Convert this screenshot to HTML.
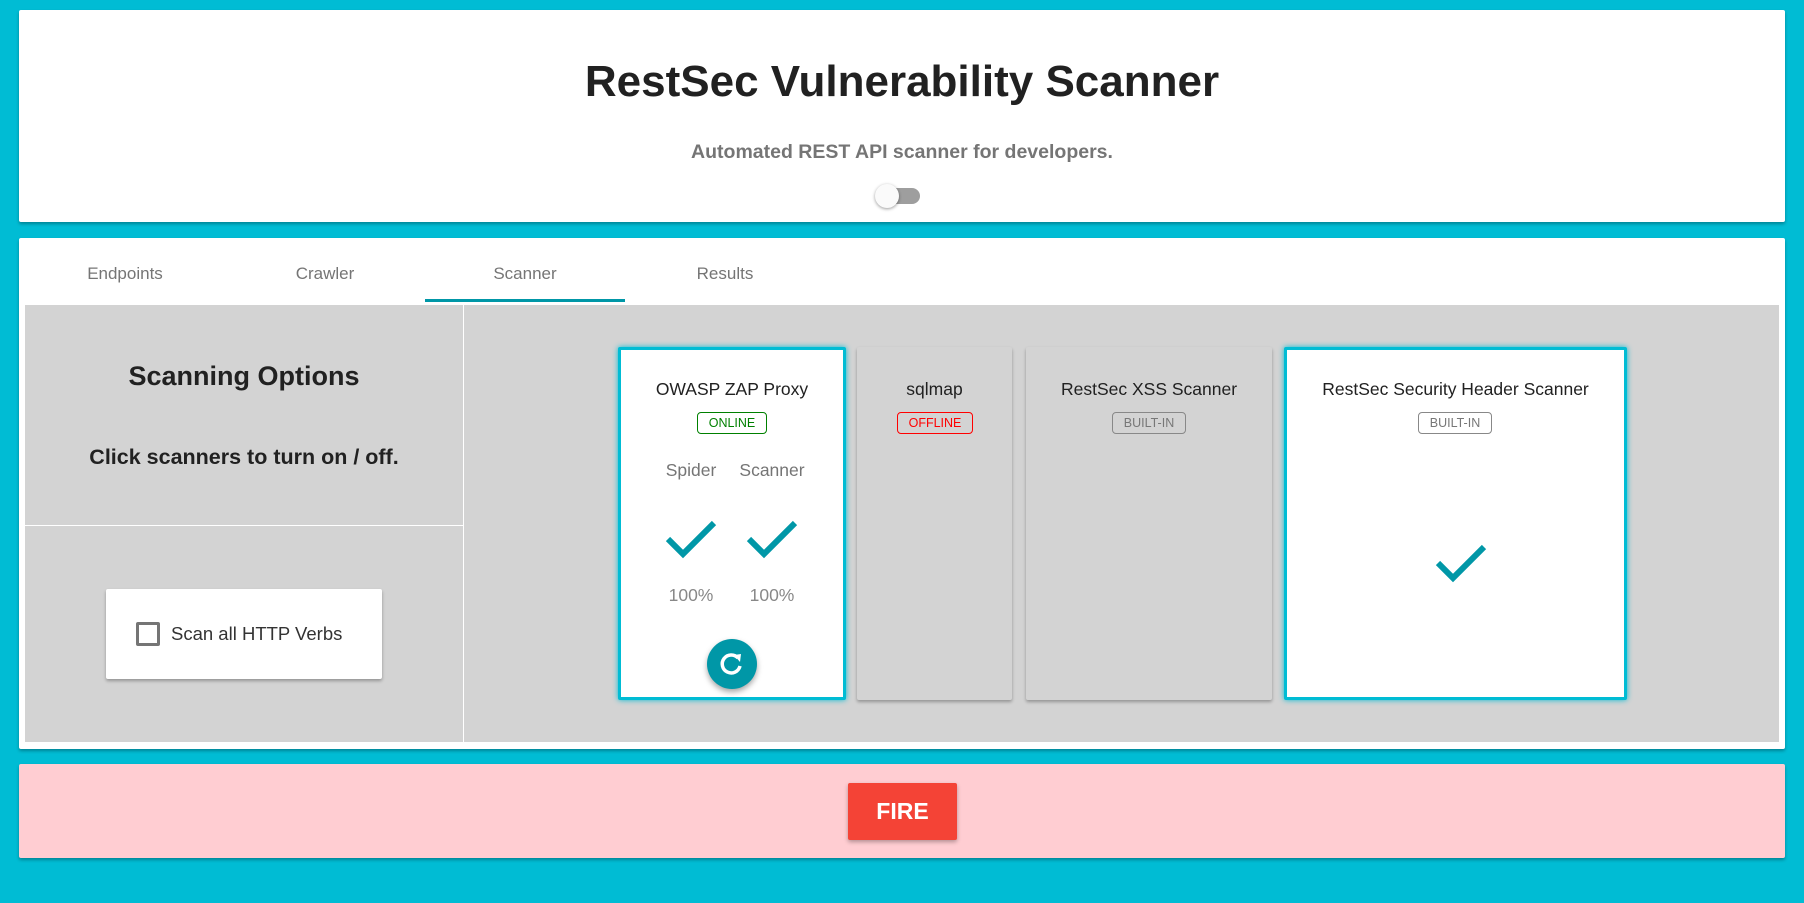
<!DOCTYPE html>
<html><head><meta charset="utf-8"><style>
*{box-sizing:border-box;margin:0;padding:0}
body{width:1804px;height:903px;background:#00bcd4;font-family:"Liberation Sans",sans-serif;position:relative;overflow:hidden}
.a{position:absolute}
.card{background:#fff;box-shadow:0 2px 3px rgba(0,0,0,.3);border-radius:2px}
.c{text-align:center}
.tab{position:absolute;top:264px;width:200px;text-align:center;font-size:17px;color:#757575}
.sc{position:absolute;top:347px;height:353px;background:#d3d3d3;box-shadow:0 2px 3px rgba(0,0,0,.3);border-radius:2px}
.sel{background:#fff;border:3px solid #00bcd4;box-shadow:0 0 6px #00bcd4}
.ttl{position:absolute;left:0;right:0;top:378px;text-align:center;font-size:17.5px;color:#212121}
.bd{position:absolute;top:411px;height:22px;border:1px solid;border-radius:4px;font-size:12.5px;line-height:20px;text-align:center}
.g{font-size:17.5px;color:#757575;position:absolute;text-align:center;width:80px}
</style></head><body>
<div class="a card" style="left:19px;top:10px;width:1766px;height:212px"></div>
<div class="a c" style="left:0;width:1804px;top:57px;font-size:44px;font-weight:bold;color:#212121">RestSec Vulnerability Scanner</div>
<div class="a c" style="left:0;width:1804px;top:141px;font-size:19.5px;font-weight:bold;color:#757575">Automated REST API scanner for developers.</div>
<div class="a" style="left:880px;top:188px;width:40px;height:16px;border-radius:8px;background:#9e9e9e"></div>
<div class="a" style="left:875px;top:184px;width:24px;height:24px;border-radius:50%;background:#fafafa;box-shadow:0 1px 3px rgba(0,0,0,.4)"></div>

<div class="a card" style="left:19px;top:238px;width:1766px;height:511px"></div>
<div class="tab" style="left:25px">Endpoints</div>
<div class="tab" style="left:225px">Crawler</div>
<div class="tab" style="left:425px">Scanner</div>
<div class="tab" style="left:625px">Results</div>
<div class="a" style="left:425px;top:299px;width:200px;height:3px;background:#0097a7"></div>
<div class="a" style="left:25px;top:305px;width:1754px;height:437px;background:#d3d3d3"></div>
<div class="a" style="left:463px;top:305px;width:1px;height:437px;background:#fff"></div>
<div class="a" style="left:25px;top:525px;width:438px;height:1px;background:#fff"></div>
<div class="a c" style="left:25px;width:438px;top:361px;font-size:27px;font-weight:bold;color:#212121">Scanning Options</div>
<div class="a c" style="left:25px;width:438px;top:445px;font-size:21.5px;font-weight:bold;color:#212121">Click scanners to turn on / off.</div>
<div class="a card" style="left:106px;top:589px;width:276px;height:90px"></div>
<div class="a" style="left:136px;top:622px;width:24px;height:24px;border:3px solid #757575;border-radius:2px"></div>
<div class="a" style="left:171px;top:623px;font-size:18.5px;color:#333">Scan all HTTP Verbs</div>

<div class="sc sel" style="left:618px;width:228px">
 <div class="ttl" style="top:29px">OWASP ZAP Proxy</div>
 <div class="bd" style="left:76px;top:62px;width:70px;color:#008000;border-color:#008000">ONLINE</div>
 <div class="g" style="left:30px;top:110px">Spider</div>
 <div class="g" style="left:111px;top:110px">Scanner</div>
 <svg class="a" style="left:44px;top:170px" width="52" height="42" viewBox="0 0 52 42"><path d="M3 19 L18 34 L49 3" fill="none" stroke="#0097a7" stroke-width="6"/></svg>
 <svg class="a" style="left:125px;top:170px" width="52" height="42" viewBox="0 0 52 42"><path d="M3 19 L18 34 L49 3" fill="none" stroke="#0097a7" stroke-width="6"/></svg>
 <div class="g" style="left:30px;top:235px;color:#888">100%</div>
 <div class="g" style="left:111px;top:235px;color:#888">100%</div>
 <div class="a" style="left:86px;top:289px;width:50px;height:50px;border-radius:50%;background:#0097a7;box-shadow:0 3px 6px rgba(0,0,0,.35)">
  <svg width="50" height="50" viewBox="0 0 50 50"><path d="M31 19 A9 9 0 1 0 33 27" fill="none" stroke="#fff" stroke-width="3.5"/><path d="M27 16 L34 15 L33 23 Z" fill="#fff"/></svg>
 </div>
</div>
<div class="sc" style="left:857px;width:155px">
 <div class="ttl" style="top:32px">sqlmap</div>
 <div class="bd" style="left:40px;top:65px;width:76px;color:#f00;border-color:#f00">OFFLINE</div>
</div>
<div class="sc" style="left:1026px;width:246px">
 <div class="ttl" style="top:32px">RestSec XSS Scanner</div>
 <div class="bd" style="left:86px;top:65px;width:74px;color:#777;border-color:#888">BUILT-IN</div>
</div>
<div class="sc sel" style="left:1284px;width:343px">
 <div class="ttl" style="top:29px">RestSec Security Header Scanner</div>
 <div class="bd" style="left:131px;top:62px;width:74px;color:#777;border-color:#888">BUILT-IN</div>
 <svg class="a" style="left:148px;top:194px" width="52" height="42" viewBox="0 0 52 42"><path d="M3 19 L18 34 L49 3" fill="none" stroke="#0097a7" stroke-width="6"/></svg>
</div>

<div class="a" style="left:19px;top:764px;width:1766px;height:94px;background:#ffcdd2;box-shadow:0 2px 3px rgba(0,0,0,.3);border-radius:2px"></div>
<div class="a c" style="left:848px;top:783px;width:109px;height:57px;background:#f44336;color:#fff;font-weight:bold;font-size:23px;line-height:57px;border-radius:2px;box-shadow:0 2px 4px rgba(0,0,0,.3)">FIRE</div>
</body></html>
